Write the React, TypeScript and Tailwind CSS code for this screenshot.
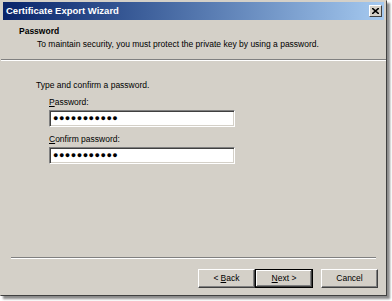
import React from "react";

const font = { fontFamily: '"Liberation Sans", Arial, sans-serif' };

function Field({ label, accel }: { label: string; accel: number }) {
  return (
    <div className="flex flex-col">
      <div className="text-[8.5px] text-black leading-[10px] mb-[3px]">
        {label.slice(0, accel)}
        <span className="underline">{label[accel]}</span>
        {label.slice(accel + 1)}
      </div>
      <div className="w-[186px] h-[17px] bg-white border-t border-l border-t-[#808080] border-l-[#808080] border-b border-r border-b-white border-r-white shadow-[inset_1px_1px_0_#404040,inset_-1px_-1px_0_#d4d0c8] flex items-center pl-[3px]">
        <span className="text-[9px] tracking-[0.5px] leading-none">●●●●●●●●●●●</span>
      </div>
    </div>
  );
}

function Btn({ children, focus }: { children: React.ReactNode; focus?: boolean }) {
  return (
    <button
      type="button"
      className={
        "h-[19px] bg-[#d4d0c8] text-[8.5px] text-black flex items-center justify-center border " +
        (focus
          ? "w-[58px] border-[#000] shadow-[inset_-1px_-1px_0_#404040,inset_1px_1px_0_#fff,inset_-2px_-2px_0_#808080]"
          : "w-[57px] border-t-white border-l-white border-b-[#404040] border-r-[#404040] shadow-[inset_-1px_-1px_0_#808080]")
      }
    >
      {children}
    </button>
  );
}

export default function App() {
  return (
    <div className="w-[392px] h-[301px] bg-white" style={font}>
      <div className="w-[387px] h-[296px] bg-[#d4d0c8] border border-t-[#d4d0c8] border-l-[#d4d0c8] border-b-[#404040] border-r-[#404040] shadow-[3px_3px_2px_rgba(0,0,0,0.45)] flex flex-col">
        {/* title bar */}
        <div className="h-[18px] mx-[2px] mt-[1px] bg-gradient-to-r from-[#0a246a] to-[#a6caf0] flex items-center justify-between pl-[3px] pr-[2px]">
          <span className="text-white font-bold text-[9.5px]">Certificate Export Wizard</span>
          <div className="w-[13px] h-[12px] bg-[#d4d0c8] border border-t-white border-l-white border-b-[#404040] border-r-[#404040] flex items-center justify-center">
            <svg width="7" height="6" viewBox="0 0 7 6">
              <path d="M0 0 L7 6 M7 0 L0 6" stroke="#000" strokeWidth="1.6" />
            </svg>
          </div>
        </div>

        {/* header */}
        <div className="h-[39px] pl-[18px] pt-[6px] flex flex-col">
          <div className="text-[8.5px] font-bold leading-[11px]">Password</div>
          <div className="text-[8.5px] leading-[11px] mt-[2px] pl-[18px]">
            To maintain security, you must protect the private key by using a password.
          </div>
        </div>
        <div className="h-[2px] border-t border-t-[#808080] border-b border-b-white" />

        {/* body */}
        <div className="flex-1 pl-[35px] pt-[19px] flex flex-col">
          <div className="text-[8.5px] leading-[11px]">Type and confirm a password.</div>
          <div className="pl-[13px] pt-[6px] flex flex-col gap-[7px]">
            <Field label="Password:" accel={0} />
            <Field label="Confirm password:" accel={0} />
          </div>
        </div>

        {/* footer */}
        <div className="mx-[10px] h-[2px] border-t border-t-[#808080] border-b border-b-white" />
        <div className="h-[36px] flex items-start justify-end pt-[10px] pr-[8px]">
          <Btn>
            &lt; <span className="underline ml-[2px]">B</span>ack
          </Btn>
          <Btn focus>
            <span className="underline">N</span>ext &gt;
          </Btn>
          <div className="w-[8px]" />
          <Btn>Cancel</Btn>
        </div>
      </div>
    </div>
  );
}
